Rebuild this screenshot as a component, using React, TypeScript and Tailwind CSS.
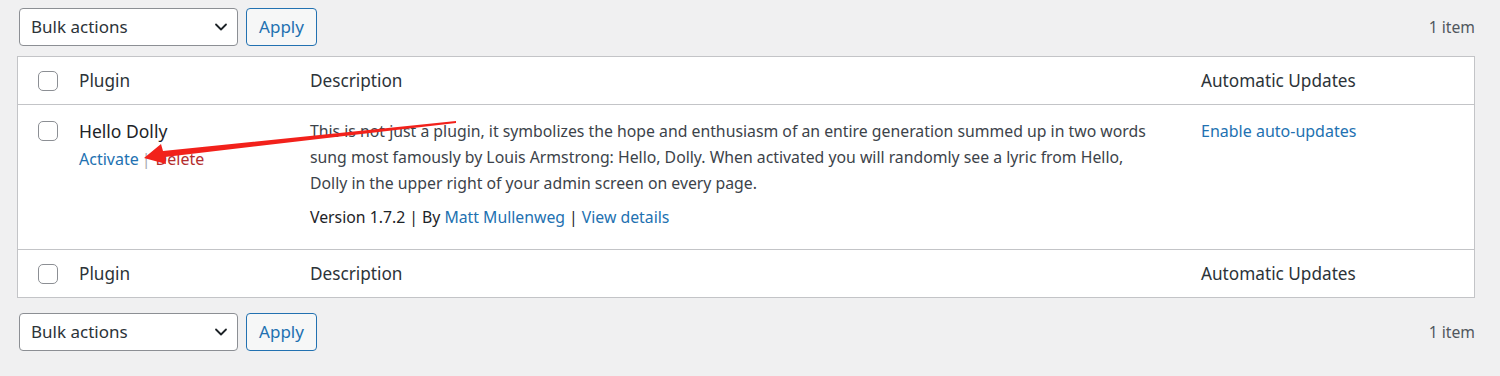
import React from "react";

function Checkbox() {
  return <span className="block w-5 h-5 rounded-[5px] border border-[#8c8f94] bg-white" />;
}

function Chevron() {
  return (
    <svg width="16" height="16" viewBox="0 0 16 16" fill="none">
      <path d="M3 5.5l5 5 5-5" stroke="#1d2327" strokeWidth="1.8" strokeLinecap="round" strokeLinejoin="round" />
    </svg>
  );
}

function TableNav() {
  return (
    <div className="flex items-center justify-between h-[38px] pl-[2px]">
      <div className="flex items-center gap-2">
        <div className="w-[219px] h-[38px] rounded-[4px] border border-[#8c8f94] bg-white flex items-center justify-between pl-[11px] pr-[8px] text-[17px] text-[#2c3338]">
          <span>Bulk actions</span>
          <Chevron />
        </div>
        <button className="w-[71px] h-[38px] rounded-[4px] border border-[#2271b1] bg-[#f6f7f7] text-[#2271b1] text-[17px]">
          Apply
        </button>
      </div>
      <span className="text-[15.7px] text-[#50575e] pt-[2px]">1 item</span>
    </div>
  );
}

function HeadRow({ top }: { top?: boolean }) {
  return (
    <div
      className={
        "flex h-[48px] items-center text-[17.2px] text-[#2c3338] " +
        (top ? "border-b border-[#c3c4c7]" : "border-t border-[#c3c4c7]")
      }
    >
      <div className="w-[51px] flex justify-end pr-[11px]">
        <Checkbox />
      </div>
      <div className="w-[231px] pl-[10px]">Plugin</div>
      <div className="w-[891px] pl-[10px]">Description</div>
      <div className="flex-1 pl-[10px]">Automatic Updates</div>
    </div>
  );
}

export default function App() {
  return (
    <div
      className="relative w-[1500px] h-[376px] bg-[#f0f0f1] pl-[17px] pr-[25px] pt-[8px] overflow-hidden"
      style={{ fontFamily: '"Noto Sans", sans-serif' }}
    >
      <TableNav />

      <div className="mt-[10px] bg-white border border-[#c3c4c7]">
        <HeadRow top />

        {/* Plugin row */}
        <div className="flex h-[144px] pt-[15px]">
          <div className="w-[51px] flex justify-end pr-[11px] pt-[1px]">
            <div className="h-5">
              <Checkbox />
            </div>
          </div>
          <div className="w-[231px] pl-[10px]">
            <div className="text-[17.5px] leading-[22px] text-[#1d2327]">Hello Dolly</div>
            <div className="mt-[7px] text-[16px] leading-[20px] flex">
              <span className="text-[#2271b1]">Activate</span>
              <span className="text-[#a7aaad] ml-[3px] mr-[5px]">|</span>
              <span className="text-[#b32d2e]">Delete</span>
            </div>
          </div>
          <div className="w-[891px] pl-[10px] pr-[41px] text-[15.8px] text-[#3c434a]">
            <p className="leading-[26px] -mt-[2px]">
              This is not just a plugin, it symbolizes the hope and enthusiasm of an entire generation summed up in two
              words sung most famously by Louis Armstrong: Hello, Dolly. When activated you will randomly see a lyric
              from Hello, Dolly in the upper right of your admin screen on every page.
            </p>
            <p className="mt-[10px] leading-[22px] text-[#1d2327] flex">
              <span>Version 1.7.2</span>
              <span className="mx-[4px]">|</span>
              <span>By&nbsp;</span>
              <span className="text-[#2271b1]">Matt Mullenweg</span>
              <span className="mx-[4px]">|</span>
              <span className="text-[#2271b1]">View details</span>
            </p>
          </div>
          <div className="flex-1 pl-[10px] text-[16px] leading-[22px] text-[#2271b1]">Enable auto-updates</div>
        </div>

        <HeadRow />
      </div>

      <div className="mt-[15px]">
        <TableNav />
      </div>

      {/* Red annotation arrow */}
      <svg className="absolute left-0 top-0 pointer-events-none" width="1500" height="376">
        <polygon
          points="144,158 161,144 163,151 456,121 456,123 165,157 166,164"
          fill="#f2211b"
        />
      </svg>
    </div>
  );
}
